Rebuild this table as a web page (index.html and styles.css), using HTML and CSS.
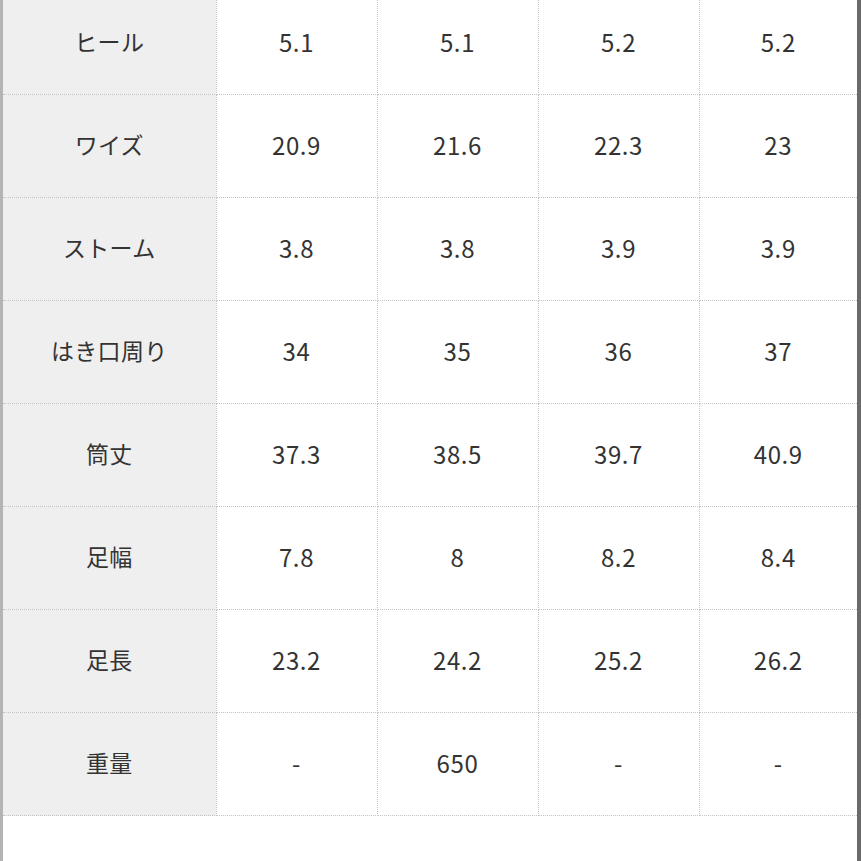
FILE: index.html
```html
<!DOCTYPE html>
<html lang="ja">
<head>
<meta charset="utf-8">
<link rel="stylesheet" href="styles.css">
</head>
<body>
<div class="frame">
  <table class="size-table">
    <colgroup>
      <col class="c-head"><col class="c-val"><col class="c-val"><col class="c-val"><col class="c-last">
    </colgroup>
    <tbody>
      <tr><th>ヒール</th><td>5.1</td><td>5.1</td><td>5.2</td><td>5.2</td></tr>
      <tr><th>ワイズ</th><td>20.9</td><td>21.6</td><td>22.3</td><td>23</td></tr>
      <tr><th>ストーム</th><td>3.8</td><td>3.8</td><td>3.9</td><td>3.9</td></tr>
      <tr><th>はき口周り</th><td>34</td><td>35</td><td>36</td><td>37</td></tr>
      <tr><th>筒丈</th><td>37.3</td><td>38.5</td><td>39.7</td><td>40.9</td></tr>
      <tr><th>足幅</th><td>7.8</td><td>8</td><td>8.2</td><td>8.4</td></tr>
      <tr><th>足長</th><td>23.2</td><td>24.2</td><td>25.2</td><td>26.2</td></tr>
      <tr><th>重量</th><td>-</td><td>650</td><td>-</td><td>-</td></tr>
    </tbody>
  </table>
</div>
</body>
</html>
```

FILE: styles.css
```css
html, body {
  margin: 0;
  padding: 0;
  background: #ffffff;
  overflow: hidden;
}
body {
  font-family: "Noto Sans CJK JP", "Noto Sans", sans-serif;
  color: #333333;
}
.frame {
  width: 861px;
  height: 880px;
  box-sizing: border-box;
  border-left: 3px solid #b4b4b4;
  border-right: 4px solid #6a6a6a;
  margin-top: -8px;
  background: #ffffff;
}
.size-table {
  width: 854px;
  border-collapse: collapse;
  table-layout: fixed;
}
.c-head { width: 213px; }
.c-val { width: 161px; }
.c-last { width: 158px; }
.size-table th,
.size-table td {
  height: 98px;
  padding: 0 0 4px 0;
  text-align: center;
  vertical-align: middle;
  font-size: 23px;
  font-weight: normal;
  border: 1px dotted #c4c4c4;
}
.size-table td {
  font-size: 24px;
  letter-spacing: 0.6px;
}
.size-table th {
  background: #efefef;
  border-left: none;
  letter-spacing: 0.3px;
}
.size-table td:last-child {
  border-right: none;
}
.size-table tr:first-child th,
.size-table tr:first-child td {
  border-top: none;
}
```
